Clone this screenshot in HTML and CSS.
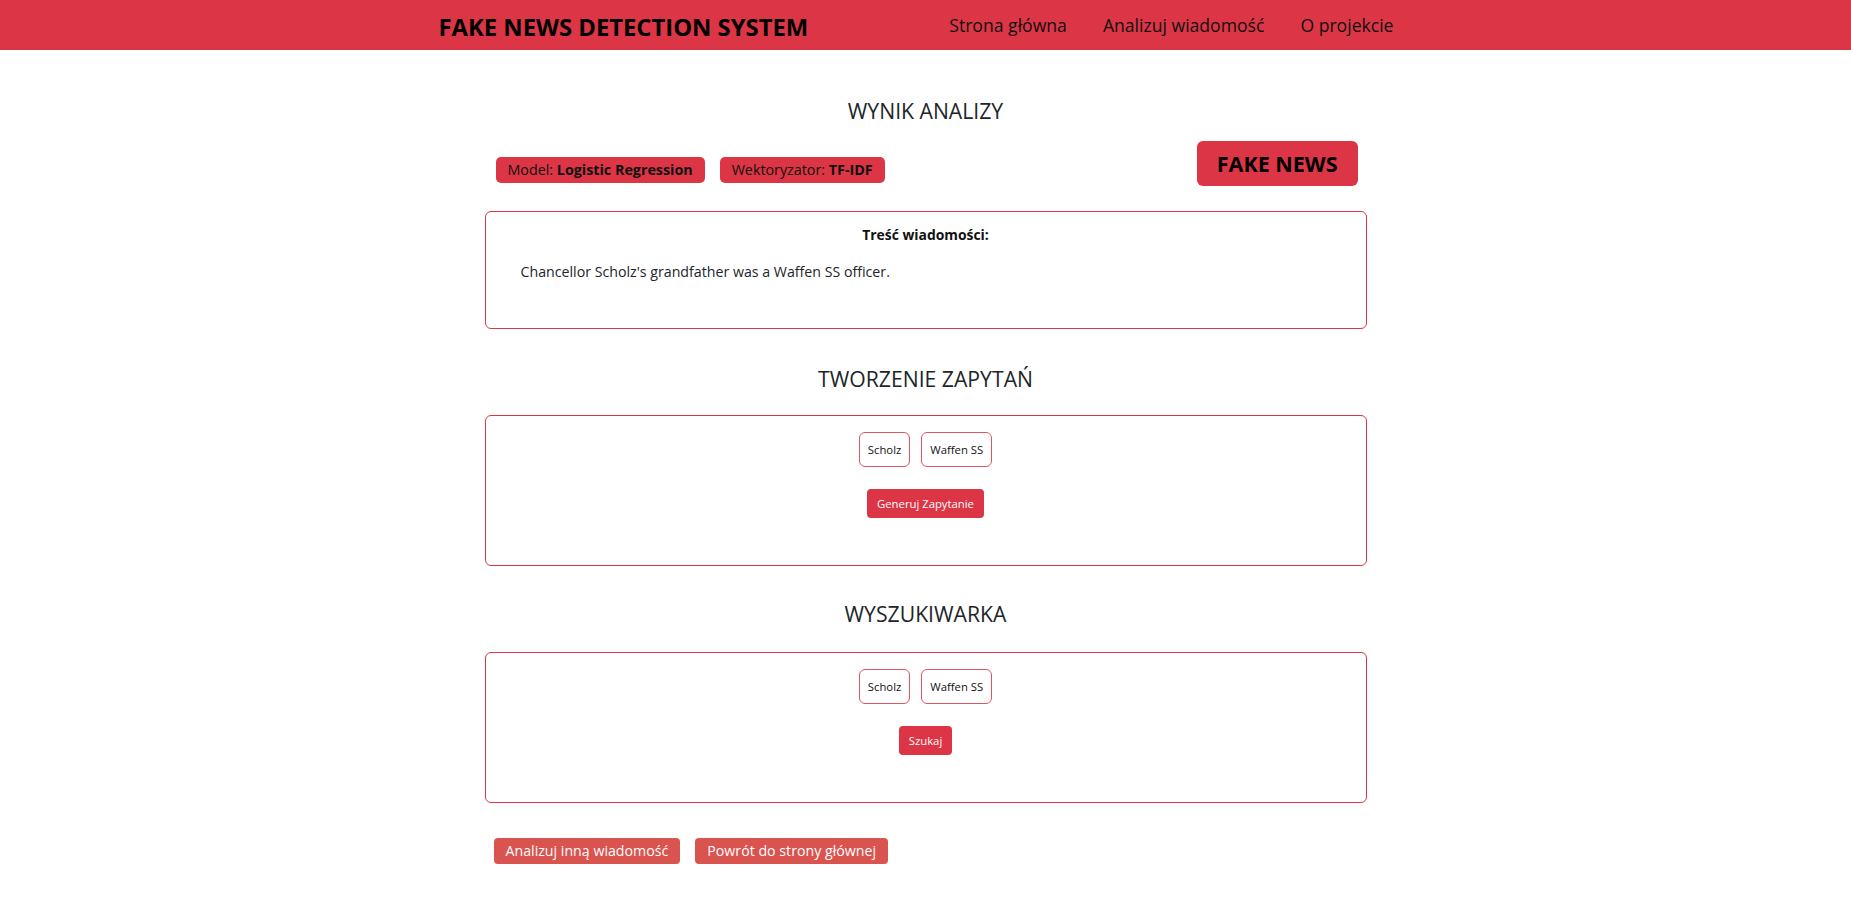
FILE: index.html
```html
<!DOCTYPE html>
<html lang="pl">
<head>
<meta charset="utf-8">
<title>Fake News Detection System</title>
<link rel="stylesheet" href="styles.css">
</head>
<body>
<nav class="navbar">
  <div class="nav-inner">
    <a class="brand" href="#">FAKE NEWS DETECTION SYSTEM</a>
    <ul class="nav-links">
      <li><a href="#">Strona główna</a></li>
      <li><a href="#">Analizuj wiadomość</a></li>
      <li><a href="#">O projekcie</a></li>
    </ul>
  </div>
</nav>
<main class="page">
  <section class="section">
    <h2 class="section-title first">WYNIK ANALIZY</h2>
    <div class="meta-row">
      <div class="badges">
        <span class="badge">Model: <b>Logistic Regression</b></span>
        <span class="badge">Wektoryzator: <b>TF-IDF</b></span>
      </div>
      <div class="verdict">FAKE NEWS</div>
    </div>
    <div class="card message-card">
      <p class="card-label">Treść wiadomości:</p>
      <p class="message-text">Chancellor Scholz's grandfather was a Waffen SS officer.</p>
    </div>
  </section>

  <section class="section">
    <h2 class="section-title">TWORZENIE ZAPYTAŃ</h2>
    <div class="card tags-card">
      <div class="tags">
        <span class="tag">Scholz</span>
        <span class="tag">Waffen SS</span>
      </div>
      <button class="btn-small">Generuj Zapytanie</button>
    </div>
  </section>

  <section class="section">
    <h2 class="section-title">WYSZUKIWARKA</h2>
    <div class="card tags-card">
      <div class="tags">
        <span class="tag">Scholz</span>
        <span class="tag">Waffen SS</span>
      </div>
      <button class="btn-small">Szukaj</button>
    </div>
  </section>

  <div class="actions">
    <a class="btn-action" href="#">Analizuj inną wiadomość</a>
    <a class="btn-action" href="#">Powrót do strony głównej</a>
  </div>
</main>
</body>
</html>
```
FILE: styles.css
```css
* { box-sizing: border-box; }

body {
  margin: 0;
  font-family: "Open Sans", "Noto Sans", sans-serif;
  color: #212529;
  background: #fff;
}

.navbar {
  background: #dc3545;
  height: 50px;
}

.nav-inner {
  width: 974px;
  margin: 0 auto;
  padding-right: 19px;
  height: 100%;
  display: flex;
  align-items: center;
  justify-content: space-between;
}

.brand {
  font-size: 23.8px;
  font-weight: 700;
  color: #000;
  text-decoration: none;
  margin-top: 3px;
}

.nav-links {
  list-style: none;
  margin: 0;
  padding: 0;
  display: flex;
  gap: 36px;
}

.nav-links a {
  font-size: 17.6px;
  color: #111;
  text-decoration: none;
}

.page {
  width: 882px;
  margin: 0 auto;
  padding-top: 49px;
  padding-bottom: 40px;
}

.section-title {
  margin: 38px 0 0;
  font-size: 21.2px;
  line-height: 24px;
  font-weight: 400;
  text-align: center;
  color: #212529;
}

.section-title.first { margin-top: 0; }

.section:nth-of-type(3) .section-title { margin-top: 36px; }

.meta-row {
  margin-top: 18px;
  display: flex;
  align-items: flex-end;
  justify-content: space-between;
  padding: 0 9px 0 11px;
}

.badges {
  display: flex;
  gap: 15px;
  margin-bottom: 3px;
}

.badge {
  background: #dc3545;
  color: #111;
  height: 26px;
  line-height: 26px;
  padding: 0 12px;
  border-radius: 5px;
  font-size: 14.3px;
}

.badge b { font-weight: 700; }

.verdict {
  background: #dc3545;
  color: #000;
  font-weight: 700;
  font-size: 21.5px;
  height: 45px;
  line-height: 45px;
  padding: 0 20px;
  border-radius: 6px;
}

.card {
  border: 1px solid #dc3545;
  border-radius: 6px;
  margin-top: 24px;
}

.message-card {
  margin-top: 25px;
  padding: 14px 0 46px;
}

.card-label {
  margin: 0;
  text-align: center;
  font-weight: 700;
  font-size: 13.9px;
  line-height: 18px;
  color: #111;
}

.message-text {
  margin: 17px 0 0;
  padding: 0 20px 0 35px;
  font-size: 14.2px;
  line-height: 21px;
  color: #212529;
}

.tags-card {
  padding: 16px 0 47px;
  display: flex;
  flex-direction: column;
  align-items: center;
}

.section:nth-of-type(3) .tags-card { margin-top: 26px; }

.tags {
  display: flex;
  gap: 11px;
}

.tag {
  border: 1px solid #e05660;
  border-radius: 6px;
  padding: 7px 8px;
  font-size: 11.3px;
  line-height: 19px;
  color: #111;
}

.btn-small {
  margin-top: 22px;
  background: #dc3545;
  color: #fff;
  border: 0;
  border-radius: 4px;
  padding: 5px 10px;
  font-family: inherit;
  font-size: 11.3px;
  line-height: 19px;
}

.actions {
  margin-top: 35px;
  display: flex;
  gap: 15px;
  padding-left: 9px;
}

.btn-action {
  background: #d9534f;
  color: #fff;
  text-decoration: none;
  font-size: 14.2px;
  height: 26px;
  line-height: 26px;
  padding: 0 12px;
  border-radius: 4px;
}
```
